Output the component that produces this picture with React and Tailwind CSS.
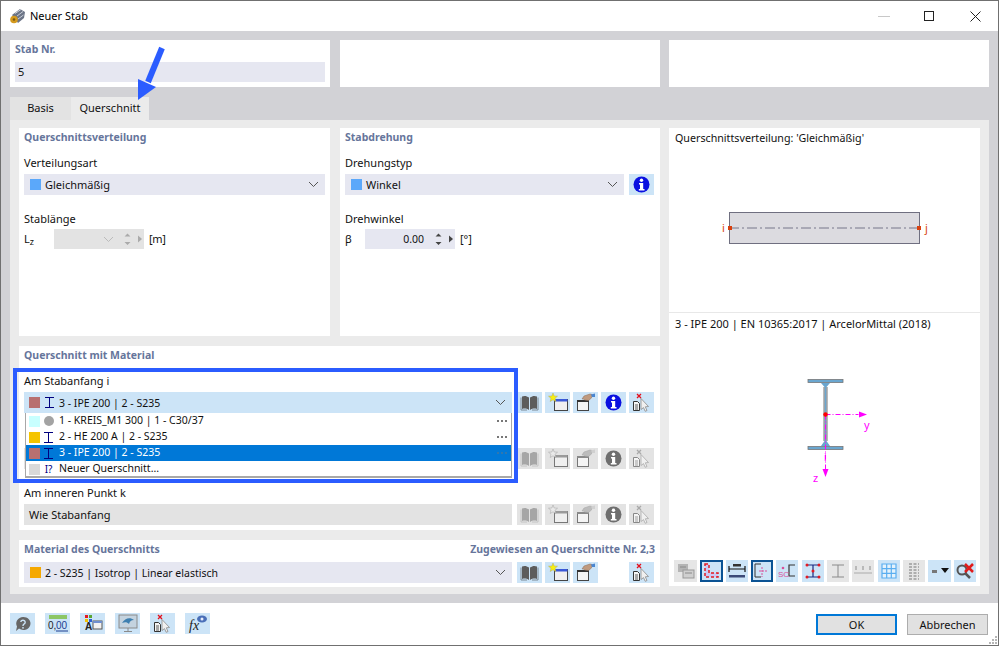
import React from "react";

const Chevron = ({ color = "#555" }) => (
  <svg width="11" height="7" viewBox="0 0 11 7" fill="none">
    <path d="M1 1l4.5 4.5L10 1" stroke={color} strokeWidth="1" />
  </svg>
);

const Spin = ({ color = "#555" }) => (
  <svg width="22" height="16" viewBox="0 0 22 16">
    <path d="M2.500 5.500L5.500 2.500L8.500 5.500zM2.500 11L8.500 11L5.500 14z" fill={color} />
    <path d="M16 4.500L20 8L16 11.500z" fill={color} />
  </svg>
);

const IBeam = ({ color = "#00007f" }) => (
  <svg width="11" height="11" viewBox="0 0 11 11">
    <path d="M1 .5h9M1 10.500h9M5.500 .5v10" stroke={color} strokeWidth="1" fill="none" />
  </svg>
);

const Swatch = ({ className }) => <span className={`w-[11px] h-[11px] shrink-0 ${className}`} />;

const Book = ({ off }) => (
  <svg width="25" height="21" viewBox="0 0 25 21">
    <path d="M5 4.500c2.500-1 4.500-.7 7 1V18c-2.500-1.500-4.500-1.800-7-1zM20 4.500c-2.500-1-4.500-.7-7 1V18c2.500-1.500 4.500-1.800 7-1z" fill={off ? "#a6a6a6" : "#5c5c5c"} />
    <path d="M4 5.500V18h6M21 5.500V18h-6" stroke={off ? "#c4c4c4" : "#7d8a96"} strokeWidth="1" fill="none" />
  </svg>
);

const StarWin = ({ off }) => (
  <svg width="25" height="21" viewBox="0 0 25 21">
    <rect x="9.500" y="7.500" width="13" height="11" fill={off ? "#efefef" : "#f0f0f0"} stroke={off ? "#777" : "#444"} strokeWidth="1" />
    <rect x="10" y="7" width="12.500" height="2.500" fill={off ? "#9a9a9a" : "#3a59d8"} />
    <path d="M8 1l1.200 3 3.300.2-2.500 2.100.8 3.200L8 7.800 5.200 9.500 6 6.300 3.500 4.200l3.300-.2z" fill={off ? "#e9e9e9" : "#f7ee10"} stroke={off ? "#a0a0a0" : "#b5ad5c"} strokeWidth=".5" />
  </svg>
);

const HandWin = ({ off }) => (
  <svg width="25" height="21" viewBox="0 0 25 21">
    <rect x="4.500" y="8.500" width="11" height="10" fill="#f4f4f4" stroke={off ? "#777" : "#444"} strokeWidth="1" />
    <rect x="4" y="8" width="12" height="2" fill={off ? "#8a8a8a" : "#333"} />
    <path d="M9 7l2-3 6-2 2 .5-.5 3.500-3 2.500-4-.5-1-1z" fill={off ? "#bcbcbc" : "#bf9a80"} stroke={off ? "#a5a5a5" : "#8f6f58"} strokeWidth=".5" />
    <path d="M18 2.500l4-1V5h-3z" fill={off ? "#d0d0d0" : "#4a86d0"} />
  </svg>
);

const Info = ({ off }) => (
  <svg width="25" height="21" viewBox="0 0 25 21">
    <circle cx="12.500" cy="10.500" r="8" fill={off ? "#6e6e6e" : "#0a10e0"} />
    <circle cx="12.500" cy="6.300" r="1.700" fill="#fff" />
    <path d="M10 9h4.200v6H15.500v1.400H9.800V15h1.200v-4.600H10z" fill="#fff" />
  </svg>
);

const DelPick = ({ off }) => (
  <svg width="25" height="21" viewBox="0 0 25 21">
    <path d="M4.500 9.500h4l2 2v7h-6z" fill="#f5f5f5" stroke={off ? "#888" : "#333"} strokeWidth="1" />
    <path d="M6 13h3M6 15h3M6 17h3" stroke={off ? "#888" : "#333"} strokeWidth=".8" />
    <path d="M12 6.500l7.500 8-3.200.3 1.700 3.700-1.800.8-1.700-3.700L12 17.500z" fill="#f0f0f0" stroke={off ? "#aaa" : "#8a8a8a"} strokeWidth=".8" />
    <path d="M8 2l4 4M12 2L8 6" stroke={off ? "#a9a9a9" : "#e3101c"} strokeWidth="1.300" />
  </svg>
);

// light blue = active button, gray = disabled
const ToolBtn = ({ off, children, className = "" }) => (
  <div className={`w-[25px] h-[21px] shrink-0 flex items-center justify-center ${off ? "bg-[#e3e3e3]" : "bg-[#cce4f7]"} ${className}`}>
    {children}
  </div>
);

const ActionRow = ({ off, noInfo }) => (
  <div className="flex gap-[3px] ml-[5px]">
    <ToolBtn off={off}><Book off={off} /></ToolBtn>
    <ToolBtn off={off}><StarWin off={off} /></ToolBtn>
    <ToolBtn off={off}><HandWin off={off} /></ToolBtn>
    {noInfo ? <div className="w-[25px]" /> : <ToolBtn off={off}><Info off={off} /></ToolBtn>}
    <ToolBtn off={off}><DelPick off={off} /></ToolBtn>
  </div>
);

const Title = ({ children, className = "" }) => (
  <div className={`font-bold text-[10.5px] text-[#66759b] leading-[18px] ${className}`}>{children}</div>
);

const Card = ({ className = "", children }) => <div className={`bg-white ${className}`}>{children}</div>;

const Select = ({ swatch, text, w, small }) => (
  <div className={`h-[21px] bg-[#e6e7f1] flex items-center ${w}`}>
    <Swatch className={`ml-[6px] ${swatch}`} />
    <span className={`ml-[4px] flex-1 ${small ? "text-[10.5px] pt-[2px]" : "pt-[1px]"}`}>{text}</span>
    <span className="mr-[6px] flex"><Chevron /></span>
  </div>
);

const DropRow = ({ swatch, icon, text, dots, active }) => (
  <div className={`h-4 flex items-center pl-[3px] text-[10.5px] ${active ? "bg-[#0078d7] text-white" : ""}`}>
    <Swatch className={swatch} />
    <span className="w-[11px] ml-[3px] flex justify-center">{icon}</span>
    <span className="ml-[5px] flex-1 -mt-[1px]">{text}</span>
    {dots && <span className={`mr-[2px] w-[12px] flex gap-[2px] ${active ? "opacity-40" : ""}`}>
      <i className="w-[2px] h-[2px] bg-[#777]" /><i className="w-[2px] h-[2px] bg-[#777]" /><i className="w-[2px] h-[2px] bg-[#777]" />
    </span>}
  </div>
);

const CrossSection = () => (
  <svg width="70" height="115" viewBox="0 0 70 115">
    <rect x="1" y="0.500" width="35" height="3" fill="#6aa6cf" stroke="#777" strokeWidth=".8" />
    <rect x="1" y="67.500" width="35" height="3" fill="#6aa6cf" stroke="#777" strokeWidth=".8" />
    <path d="M14 4h9l-3.500 4v54l3.500 5h-9l3.500-5V8z" fill="#6aa6cf" />
    <path d="M17 8v54M20 8v54" stroke="#777" strokeWidth="1" />
    <path d="M18.500 35.500h33M18.500 35.500v58" stroke="#f0f" strokeWidth="1" strokeDasharray="5 2 1 2" fill="none" />
    <path d="M52 32.500l8 3-8 3z" fill="#f0f" />
    <path d="M15.500 90l3 8 3-8z" fill="#f0f" />
    <circle cx="18.500" cy="35.500" r="2.200" fill="#f00" />
    <text x="57" y="50" fontSize="11" fill="#f0f">y</text>
    <text x="6" y="103" fontSize="11" fill="#f0f">z</text>
    <text x="17" y="82" fontSize="10" fill="#f0f">i</text>
  </svg>
);

const MemberDiagram = () => (
  <svg width="220" height="40" viewBox="0 0 220 40">
    <rect x="15.500" y="4.500" width="190" height="31" fill="#dcdbe0" stroke="#6f6f80" strokeWidth="1" />
    <path d="M15 20h190" stroke="#77778a" strokeWidth="1" strokeDasharray="10 3 2 3" />
    <rect x="14" y="18" width="4" height="4" fill="#d8400e" />
    <rect x="203" y="18" width="4" height="4" fill="#d8400e" />
    <text x="8" y="24" fontSize="11" fill="#d8400e">i</text>
    <text x="211" y="24" fontSize="11" fill="#d8400e">j</text>
  </svg>
);

const V = ({ off, sel, children, className = "w-[22px] ml-[3px]" }) => (
  <div className={`h-[22px] flex items-center justify-center shrink-0 ${className} ${sel ? "bg-[#cce4f7] border-2 border-[#0b5394]" : off ? "bg-[#e6e6e6]" : "bg-[#cce4f7]"}`}>
    {children}
  </div>
);

const ViewToolbar = () => (
  <div className="flex pl-[5px] pt-[28px]">
    <V off className="w-[23px]">
      <svg width="20" height="18" viewBox="0 0 20 18"><rect x="2" y="2" width="10" height="8" fill="#b5b5b5" /><rect x="7" y="8" width="11" height="8" fill="#cfcfcf" stroke="#999" /><path d="M4 5h6M9 11h7" stroke="#8a8a8a" /></svg>
    </V>
    <V sel className="w-[23px] ml-[3px]">
      <svg width="17" height="16" viewBox="0 0 17 16"><path d="M2 1h4v9h9v4H2z" fill="#ccc9f5" stroke="#e31b23" strokeWidth="1.500" strokeDasharray="3 2" /></svg>
    </V>
    <V>
      <svg width="20" height="17" viewBox="0 0 20 17"><path d="M2 6h16M2 3v6M18 3v6" stroke="#111" strokeWidth="1.200" /><rect x="2" y="12" width="16" height="2.500" fill="#3b4a78" /><rect x="6" y="1" width="8" height="2.500" fill="#333" /></svg>
    </V>
    <V sel>
      <svg width="18" height="18" viewBox="0 0 18 18"><path d="M8 2H2v13h6" stroke="#333" fill="none" /><path d="M6 9h9M9 5v10" stroke="#d9509a" strokeDasharray="2 1" fill="none" /></svg>
    </V>
    <V>
      <svg width="20" height="18" viewBox="0 0 20 18"><path d="M18 3h-6v11h6" stroke="#333" fill="none" strokeWidth="1.200" /><circle cx="6" cy="6" r="1.300" fill="#d9509a" /><text x="1" y="15" fontSize="8" fontFamily="Liberation Sans" fill="#d9509a">SC</text></svg>
    </V>
    <V className="w-[22px] ml-[4px]">
      <svg width="18" height="18" viewBox="0 0 18 18"><path d="M3 3h12M3 15h12M9 3v12" stroke="#1a2a80" strokeWidth="1.200" /><g fill="#e31b23"><circle cx="3" cy="3" r="1.500" /><circle cx="15" cy="3" r="1.500" /><circle cx="3" cy="15" r="1.500" /><circle cx="15" cy="15" r="1.500" /><circle cx="9" cy="9" r="1.500" /></g></svg>
    </V>
    <V off>
      <svg width="18" height="18" viewBox="0 0 18 18"><path d="M3 3h12M3 15h12M9 3v12" stroke="#8a8a8a" strokeWidth="1" /></svg>
    </V>
    <V off>
      <svg width="20" height="16" viewBox="0 0 20 16"><path d="M1 10h18" stroke="#aaa" /><path d="M3 3v4M10 3v4M17 3v4" stroke="#aaa" strokeWidth="1.500" /></svg>
    </V>
    <V className="w-[22px] ml-[4px]">
      <svg width="18" height="18" viewBox="0 0 18 18"><path d="M2 2h14v14H2zM2 6.700h14M2 11.300h14M6.700 2v14M11.300 2v14" stroke="#5aaef0" strokeWidth="1.200" fill="#e4f2fc" /></svg>
    </V>
    <V off>
      <svg width="14" height="18" viewBox="0 0 14 18"><path d="M2 2h10M2 5h10M2 8h10M2 11h10M2 14h10M2 17h10" stroke="#777" strokeWidth="1.200" strokeDasharray="3 1.500" /></svg>
    </V>
    <V className="w-[23px] ml-[3px]">
      <svg width="22" height="12" viewBox="0 0 22 12"><rect x="3" y="5" width="5" height="3" fill="#777" /><path d="M12 3h8l-4 5z" fill="#111" /></svg>
    </V>
    <V>
      <svg width="20" height="18" viewBox="0 0 20 18"><circle cx="7" cy="8" r="4.500" fill="none" stroke="#555" strokeWidth="2" /><path d="M10 11l5 5" stroke="#555" strokeWidth="2.500" /><path d="M10 2l8 8M18 2l-8 8" stroke="#e01b1b" strokeWidth="2.500" /></svg>
    </V>
  </div>
);

const FooterIcons = () => (
  <div className="flex gap-[10px]">
    <ToolBtn>
      <svg width="20" height="18" viewBox="0 0 20 18"><path d="M10 2a7 6.500 0 1 1-4 11.500L3 16l1-4.500A7 6.500 0 0 1 10 2z" fill="#666" /><path d="M7.800 7a2.200 2 0 1 1 3.200 2c-1 .6-1 1-1 2" stroke="#cce4f7" strokeWidth="1.400" fill="none" /><circle cx="10" cy="12.800" r=".9" fill="#cce4f7" /></svg>
    </ToolBtn>
    <ToolBtn>
      <svg width="22" height="19" viewBox="0 0 22 19"><rect x="2" y="1" width="18" height="4" fill="#8cc665" /><text x="1" y="15" fontSize="10" fontFamily="Liberation Sans" fill="#222">0,</text><text x="9" y="15" fontSize="10" fontFamily="Liberation Sans" fill="#1b3c8f">00</text><path d="M9 17h12" stroke="#1b3c8f" /></svg>
    </ToolBtn>
    <ToolBtn>
      <svg width="22" height="19" viewBox="0 0 22 19"><rect x="3" y="1" width="3" height="3" fill="#e31b23" /><rect x="7" y="1" width="3" height="3" fill="#5aa532" /><rect x="3" y="5" width="3" height="3" fill="#f2c200" /><rect x="7" y="5" width="3" height="3" fill="#2c5fd0" /><text x="3" y="16" fontSize="10" fontFamily="Liberation Sans" fontWeight="bold" fill="#222">A</text><rect x="11" y="7" width="9" height="8" fill="#f2f2f2" stroke="#555" /><rect x="11" y="7" width="9" height="2" fill="#6f8fcf" /></svg>
    </ToolBtn>
    <ToolBtn>
      <svg width="22" height="19" viewBox="0 0 22 19"><rect x="2" y="1" width="18" height="13" fill="#c4d3df" stroke="#8a8a8a" /><path d="M5 9c3-5 8-6 12-3-3 0-4 1-5 4-2-2-4-2-7-1z" fill="#3d7fb0" /><path d="M11 14v3M7 17.500h8" stroke="#8a8a8a" /></svg>
    </ToolBtn>
    <ToolBtn><DelPick /></ToolBtn>
    <ToolBtn>
      <svg width="22" height="19" viewBox="0 0 22 19"><text x="2" y="16" fontSize="14" fontStyle="italic" fontFamily="Liberation Serif" fill="#222">fx</text><ellipse cx="15" cy="5" rx="5" ry="3.500" fill="#4a6fb8" /><circle cx="15" cy="5" r="1.500" fill="#e8eefc" /></svg>
    </ToolBtn>
  </div>
);

export default function App() {
  return (
    <div className="relative w-[999px] h-[646px] overflow-hidden border border-[#707070] bg-white font-['Noto_Sans',sans-serif] text-[11px] text-[#111]">
      {/* title bar */}
      <div className="h-[30px] flex items-center pl-[8px]">
        <svg width="17" height="17" viewBox="0 0 17 17">
          <path d="M3 7l8-6 5 3-1 6-6 5z" fill="#6b7486" />
          <path d="M6 5.500l6-4M8 8l6-4.500M9 11l5.500-4" stroke="#c9ced8" />
          <circle cx="5" cy="11.500" r="3.800" fill="#d49a1e" />
          <circle cx="5" cy="11.500" r="1.300" fill="#7a5a10" />
        </svg>
        <span className="ml-[4px] text-[11px] text-black">Neuer Stab</span>
        <div className="ml-auto flex items-center pr-[17px]">
          <span className="w-[12px] h-px bg-[#c8c8c8] mr-[34px]" />
          <span className="w-[10px] h-[10px] border border-[#222] mr-[36px]" />
          <svg width="11" height="11" viewBox="0 0 11 11"><path d="M.5.5l10 10M10.500.5l-10 10" stroke="#222" /></svg>
        </div>
      </div>

      {/* main area */}
      <div className="h-[572px] bg-[#d2d2d6] pl-[9px] pr-[9px] pt-[9px]">
        <div className="flex h-[47px]">
          <Card className="w-[320px] px-[5px]">
            <Title>Stab Nr.</Title>
            <div className="mt-[4px] h-[20px] bg-[#e6e7f1] pl-[3px] flex items-center">5</div>
          </Card>
          <Card className="w-[320px] ml-[10px]" />
          <Card className="w-[320px] ml-[9px]" />
        </div>

        {/* tabs */}
        <div className="flex mt-[10px] h-[23px]">
          <div className="w-[61px] bg-[#e3e3e3] flex items-center justify-center">Basis</div>
          <div className="w-[78px] bg-[#ebebeb] flex items-center justify-center">Querschnitt</div>
        </div>

        {/* tab panel */}
        <div className="bg-[#ebebeb] h-[474px] pl-[9px] pr-[9px] pt-[8px] flex gap-[9px]">
          <div className="w-[641px] flex flex-col gap-[10px]">
            <div className="flex gap-[10px] h-[208px]">
              <Card className="w-[311px] px-[5px]">
                <Title>Querschnittsverteilung</Title>
                <div className="mt-[9px] leading-[16px]">Verteilungsart</div>
                <Select swatch="bg-[#5ba8fa]" text="Gleichmäßig" w="w-[301px] mt-[3px]" />
                <div className="mt-[16px] leading-[16px]">Stablänge</div>
                <div className="flex items-center mt-[2px] h-[20px]">
                  <span className="w-[30px]">L<sub className="text-[9px] align-baseline relative top-[2px]">z</sub></span>
                  <div className="w-[90px] h-[20px] bg-[#e3e3e3] flex items-center justify-end">
                    <span className="mr-[8px] flex"><Chevron color="#bbb" /></span>
                    <Spin color="#aaa" />
                  </div>
                  <span className="ml-[5px] tracking-tight">[m]</span>
                </div>
              </Card>
              <Card className="w-[320px] px-[5px]">
                <Title>Stabdrehung</Title>
                <div className="mt-[9px] leading-[16px]">Drehungstyp</div>
                <div className="flex gap-[5px] mt-[3px]">
                  <Select swatch="bg-[#5ba8fa]" text="Winkel" w="w-[279px]" />
                  <ToolBtn><Info /></ToolBtn>
                </div>
                <div className="mt-[16px] leading-[16px]">Drehwinkel</div>
                <div className="flex items-center mt-[2px] h-[20px]">
                  <span className="w-[20px]">β</span>
                  <div className="w-[90px] h-[20px] bg-[#e6e7f1] flex items-center justify-end">
                    <span className="mr-[9px] pt-[2px] text-[10.5px]">0.00</span>
                    <Spin color="#444" />
                  </div>
                  <span className="ml-[5px]">[°]</span>
                </div>
              </Card>
            </div>

            <Card className="h-[184px] px-[5px]">
              <Title>Querschnitt mit Material</Title>
              <div className="mt-[9px] leading-[16px]">Am Stabanfang i</div>
              <div className="flex mt-[3px]">
                <div className="w-[488px] h-[21px] bg-[#cce4f7] flex items-center pl-[5px]">
                  <Swatch className="bg-[#b87070]" />
                  <span className="ml-[4px] flex"><IBeam /></span>
                  <span className="ml-[4px] flex-1 pt-[2px] text-[10.5px]">3 - IPE 200 | 2 - S235</span>
                  <span className="mr-[6px] flex"><Chevron /></span>
                </div>
                <ActionRow />
              </div>
              {/* label of this row is hidden behind the open list */}
              <div className="flex mt-[35px]">
                <div className="w-[488px] h-[21px] bg-[#e3e3e3]" />
                <ActionRow off />
              </div>
              <div className="mt-[16px] leading-[16px]">Am inneren Punkt k</div>
              <div className="flex mt-[3px]">
                <div className="w-[488px] h-[21px] bg-[#e3e3e3] flex items-center pl-[5px] pt-[1px]">Wie Stabanfang</div>
                <ActionRow off />
              </div>
            </Card>

            <Card className="h-[47px] px-[5px]">
              <div className="flex justify-between">
                <Title>Material des Querschnitts</Title>
                <Title>Zugewiesen an Querschnitte Nr. 2,3</Title>
              </div>
              <div className="flex mt-[4px]">
                <Select small swatch="bg-[#f5a800]" text="2 - S235 | Isotrop | Linear elastisch" w="w-[488px]" />
                <ActionRow noInfo />
              </div>
            </Card>
          </div>

          {/* preview column */}
          <Card className="w-[311px] h-[458px] flex flex-col">
            <div className="h-[185px] border-b border-[#e8e8e8] px-[6px] pt-[1px]">
              <div className="leading-[18px] text-[10.7px]">Querschnittsverteilung: 'Gleichmäßig'</div>
              <div className="mt-[61px] ml-[39px] flex"><MemberDiagram /></div>
            </div>
            <div className="px-[6px] pt-[2px] leading-[18px]">3 - IPE 200 | EN 10365:2017 | ArcelorMittal (2018)</div>
            <div className="h-[199px] pl-[138px] pt-[46px]"><CrossSection /></div>
            <ViewToolbar />
          </Card>
        </div>
      </div>

      {/* footer */}
      <div className="h-[42px] flex items-start pl-[9px] pr-[10px] pt-[10px]">
        <FooterIcons />
        <div className="ml-auto flex gap-[10px] pt-[1px]">
          <div className="w-[81px] h-[21px] border-2 border-[#0078d7] bg-[#e1e1e1] flex items-center justify-center pt-[1px]">OK</div>
          <div className="w-[81px] h-[21px] border border-[#adadad] bg-[#e1e1e1] flex items-center justify-center pt-[1px]">Abbrechen</div>
        </div>
      </div>
      <svg className="absolute right-0 bottom-0" width="10" height="10" viewBox="0 0 10 10">
        <path d="M7 1h2v2H7zM4 4h2v2H4zM7 4h2v2H7zM1 7h2v2H1zM4 7h2v2H4zM7 7h2v2H7z" fill="#b5b5b5" />
      </svg>

      {/* open dropdown + callout frame, both sit over the form */}
      <div className="absolute left-[24px] top-[412px] w-[487px] h-[65px] bg-white border-b-2 border-x border-[#a8a8a8] border-t-0">
        <DropRow swatch="bg-[#c8ffff]" icon={<span className="w-[10px] h-[10px] rounded-full bg-[#a3a3a3]" />} text="1 - KREIS_M1 300 | 1 - C30/37" dots />
        <DropRow swatch="bg-[#f5c400]" icon={<IBeam />} text="2 - HE 200 A | 2 - S235" dots />
        <DropRow swatch="bg-[#b87070]" icon={<IBeam />} text="3 - IPE 200 | 2 - S235" dots active />
        <DropRow swatch="bg-[#d9d9d9]" icon={<span className="text-[10px] leading-none text-[#00007f]">I?</span>} text="Neuer Querschnitt..." />
      </div>
      <div className="absolute left-[12px] top-[367px] w-[505px] h-[115px] border-4 border-[#2b5cff]" />
      <svg className="absolute left-[132px] top-[45px]" width="36" height="56" viewBox="0 0 36 56">
        <path d="M29 2L15 36" stroke="#2b5cff" strokeWidth="6" fill="none" />
        <path d="M5 33L23 41L5 54z" fill="#2b5cff" />
      </svg>
    </div>
  );
}
